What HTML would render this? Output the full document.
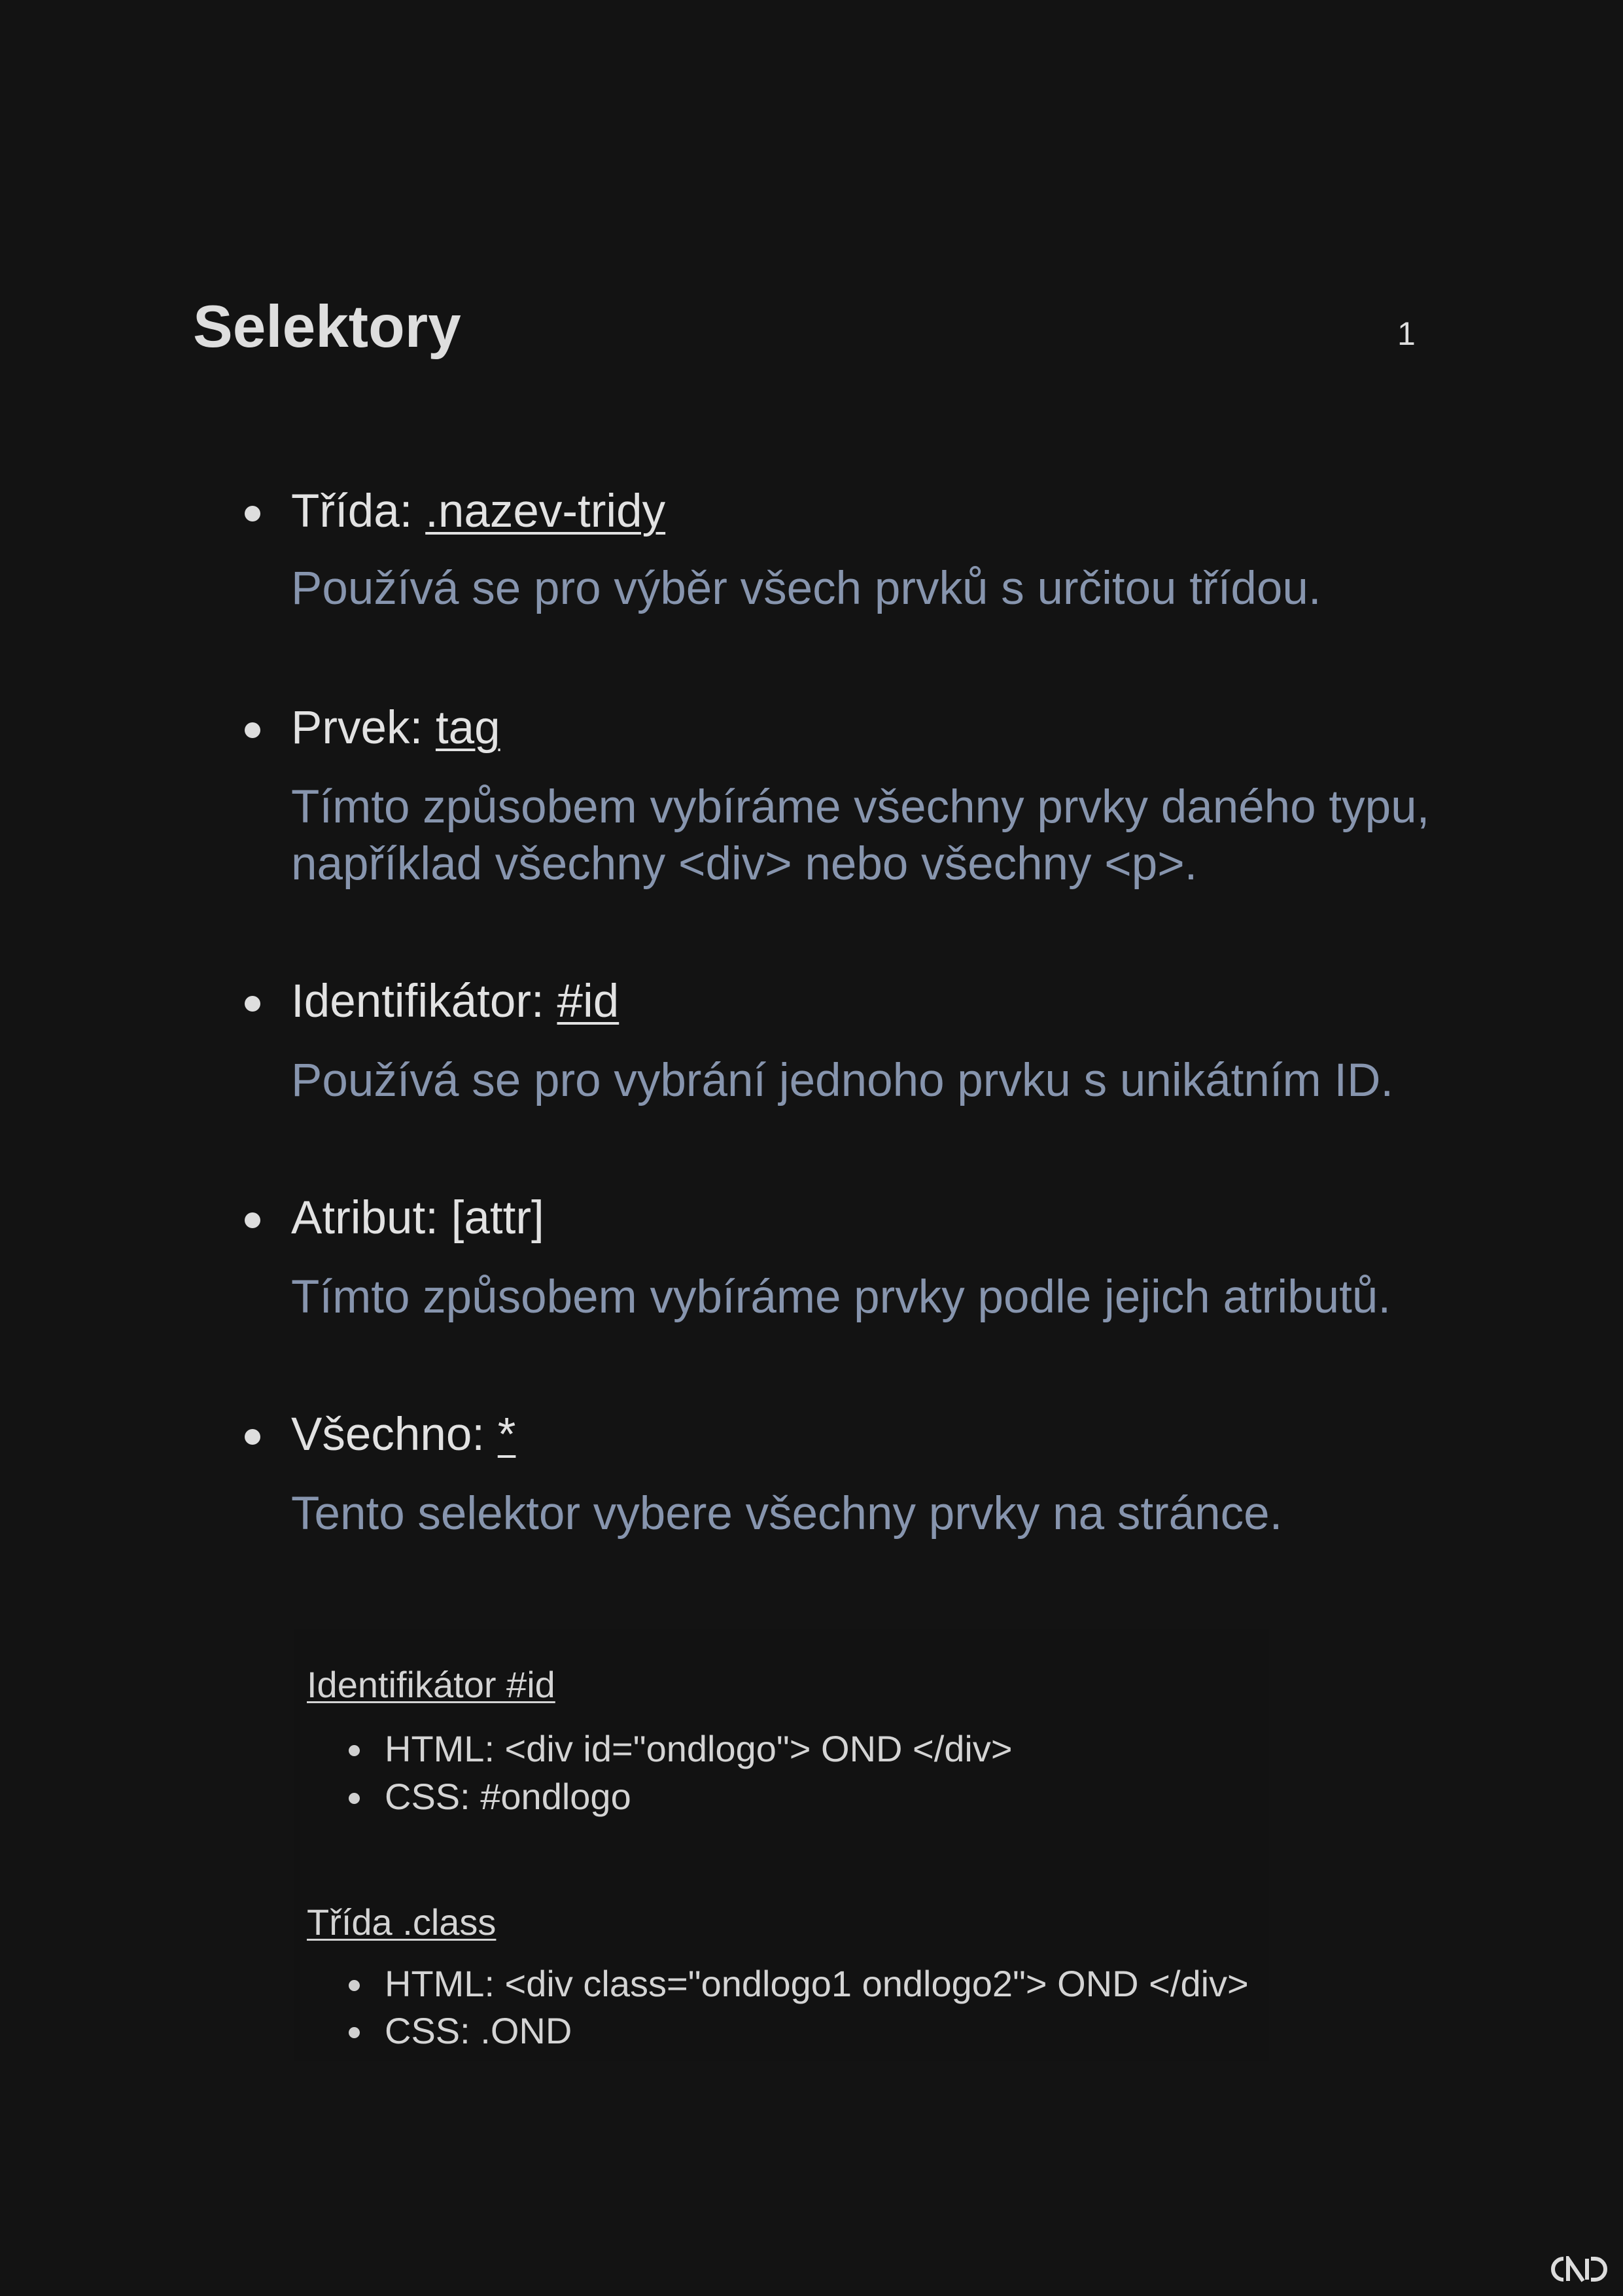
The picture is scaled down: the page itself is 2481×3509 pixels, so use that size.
<!DOCTYPE html>
<html><head><meta charset="utf-8">
<style>
html,body{margin:0;padding:0}
body{width:2481px;height:3509px;background:#131313;position:relative;overflow:hidden;font-family:"Liberation Sans",Arial,sans-serif;color:#e0e0e0}
.t{position:absolute;white-space:nowrap;line-height:1}
.h{font-size:71px;color:#e2e2e2}
.d{font-size:71px;color:#8795ae}
.s{font-size:56px;color:#d4d4d4}
u{text-decoration:underline;text-decoration-thickness:4px;text-underline-offset:8px}
.b{position:absolute;width:24px;height:24px;border-radius:50%;background:#dedede}
.sb{position:absolute;width:17px;height:17px;border-radius:50%;background:#d0d0d0}
</style></head><body>
<div class="t" style="left:295px;top:454px;font-size:91px;font-weight:bold;color:#dedede">Selektory</div>
<div class="t" style="left:2136px;top:485px;font-size:50px;color:#dedede">1</div>

<div class="b" style="left:374px;top:773px"></div>
<div class="t h" style="left:445px;top:746px">Třída: <u>.nazev-tridy</u></div>
<div class="t d" style="left:445px;top:864px">Používá se pro výběr všech prvků s určitou třídou.</div>

<div class="b" style="left:374px;top:1104px"></div>
<div class="t h" style="left:445px;top:1077px">Prvek: <u>tag</u></div>
<div class="t d" style="left:445px;top:1198px">Tímto způsobem vybíráme všechny prvky daného typu,</div>
<div class="t d" style="left:445px;top:1285px">například všechny &lt;div&gt; nebo všechny &lt;p&gt;.</div>

<div class="b" style="left:374px;top:1522px"></div>
<div class="t h" style="left:445px;top:1495px">Identifikátor: <u>#id</u></div>
<div class="t d" style="left:445px;top:1616px">Používá se pro vybrání jednoho prvku s unikátním ID.</div>

<div class="b" style="left:374px;top:1853px"></div>
<div class="t h" style="left:445px;top:1826px">Atribut: [attr]</div>
<div class="t d" style="left:445px;top:1947px">Tímto způsobem vybíráme prvky podle jejich atributů.</div>

<div class="b" style="left:374px;top:2184px"></div>
<div class="t h" style="left:445px;top:2157px">Všechno: <u>*</u></div>
<div class="t d" style="left:445px;top:2278px">Tento selektor vybere všechny prvky na stránce.</div>

<div style="position:absolute;left:450px;top:2490px;width:1490px;height:660px;background:#121212"></div>
<div class="t s" style="left:469px;top:2547px"><u style="text-decoration-thickness:3px;text-underline-offset:6px">Identifikátor #id</u></div>
<div class="sb" style="left:533px;top:2667px"></div>
<div class="t s" style="left:588px;top:2645px">HTML: &lt;div id="ondlogo"&gt; OND &lt;/div&gt;</div>
<div class="sb" style="left:533px;top:2740px"></div>
<div class="t s" style="left:588px;top:2718px">CSS: #ondlogo</div>

<div class="t s" style="left:469px;top:2910px"><u style="text-decoration-thickness:3px;text-underline-offset:6px">Třída .class</u></div>
<div class="sb" style="left:533px;top:3026px"></div>
<div class="t s" style="left:588px;top:3004px">HTML: &lt;div class="ondlogo1 ondlogo2"&gt; OND &lt;/div&gt;</div>
<div class="sb" style="left:533px;top:3098px"></div>
<div class="t s" style="left:588px;top:3076px">CSS: .OND</div>

<svg style="position:absolute;left:2370px;top:3448px" width="92" height="40" viewBox="0 0 92 40">
<g fill="none" stroke="#dcdcdc" stroke-width="6">
<path d="M20 4 A16 16 0 0 0 20 36"/>
<path d="M27 38 V4 L50 38"/>
<path d="M56 4 V36"/>
<path d="M62 4 H68 A16 16 0 0 1 68 36 H62"/>
</g></svg>
</body></html>
